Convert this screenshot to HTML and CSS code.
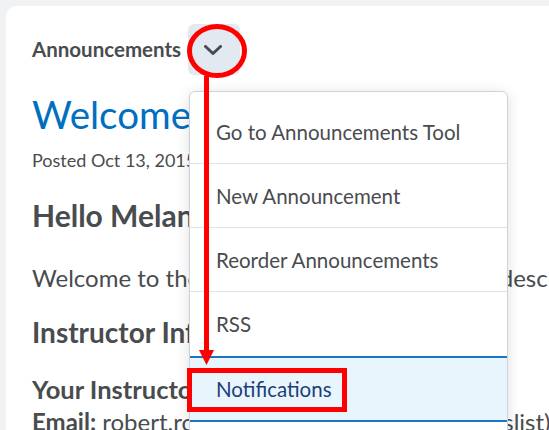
FILE: index.html
```html
<!DOCTYPE html>
<html>
<head>
<meta charset="utf-8">
<link rel="stylesheet" href="styles.css">
</head>
<body>
<div class="page">
  <div class="card">
    <div class="widget-head">
      <span class="widget-title">Announcements</span>
      <span class="menu-btn" role="button" aria-label="Actions">
        <svg class="chev" width="18" height="10" viewBox="0 0 18 10"><path d="M1.5 1.5 L9 8.5 L16.5 1.5" fill="none" stroke="#494c4e" stroke-width="3" stroke-linecap="round" stroke-linejoin="round"/></svg>
      </span>
    </div>
    <div class="content">
      <h1 class="ann-title">Welcome!</h1>
      <div class="posted">Posted Oct 13, 2015 9:00 AM</div>
      <h2 class="hello">Hello Melanie!</h2>
      <p class="line intro">Welcome to the course! Below is the course description.</p>
      <h2 class="sec">Instructor Information</h2>
      <p class="line who"><b>Your Instructor:</b> Robert</p>
      <p class="line email"><b>Email:</b> robert.robertson@school.edu (use classlist)</p>
    </div>
  </div>

  <div class="dropdown">
    <div class="item">Go to Announcements Tool</div>
    <div class="item">New Announcement</div>
    <div class="item">Reorder Announcements</div>
    <div class="item last">RSS</div>
    <div class="item active">Notifications</div>
    <div class="item">Settings</div>
  </div>

  <svg class="annot" width="549" height="430" viewBox="0 0 549 430">
    <ellipse cx="217" cy="51" rx="27.5" ry="24.5" fill="none" stroke="#ff0000" stroke-width="5"/>
    <line x1="206.5" y1="76" x2="206.5" y2="352" stroke="#ff0000" stroke-width="5"/>
    <polygon points="199,350 214,350 206.5,365" fill="#ff0000"/>
    <rect x="189.5" y="370.5" width="155" height="39" fill="none" stroke="#ff0000" stroke-width="5"/>
  </svg>
</div>
</body>
</html>
```
FILE: styles.css
```css
html, body {
  margin: 0;
  padding: 0;
}
body {
  background: #f1f2f4;
  font-family: Lato, "Open Sans", sans-serif;
  color: #494c4e;
  overflow: hidden;
  width: 549px;
  height: 430px;
}
.page {
  position: relative;
  width: 549px;
  height: 430px;
  overflow: hidden;
}
.card {
  margin: 6px 0 0 6px;
  width: 800px;
  height: 600px;
  background: #ffffff;
  border-radius: 10px 0 0 0;
  padding: 18px 0 0 26px;
  box-sizing: border-box;
}
.widget-head {
  display: flex;
  align-items: center;
  gap: 7px;
  height: 51px;
}
.widget-title {
  font-size: 20.5px;
  line-height: 1.2;
  font-weight: 700;
  color: #494c4e;
}
.menu-btn {
  flex: none;
  width: 52px;
  height: 51px;
  border-radius: 6px;
  background: #e3e9f1;
  display: flex;
  align-items: center;
  justify-content: center;
}
.chev {
  display: block;
  flex: none;
  margin-left: -3px;
}
.content {
  white-space: nowrap;
}
.ann-title {
  margin: 15.5px 0 0 0;
  font-size: 38.5px;
  font-weight: 400;
  color: #006fbf;
  line-height: 1.2;
}
.posted {
  margin-top: 13px;
  font-size: 18px;
  line-height: 1.2;
}
.hello {
  margin: 25.5px 0 0 0;
  font-size: 30px;
  font-weight: 700;
  line-height: 1.2;
}
.sec {
  margin: 23px 0 0 0;
  font-size: 28px;
  font-weight: 700;
  line-height: 1.2;
}
.line {
  margin: 0;
  font-size: 24px;
  line-height: 1.2;
}
.intro {
  margin-top: 31.5px;
}
.who {
  margin-top: 24.3px;
  font-size: 25.5px;
}
.email {
  margin-top: 3px;
}
.dropdown {
  position: absolute;
  left: 189px;
  top: 91px;
  width: 319px;
  background: #ffffff;
  border: 1px solid #cdd3dc;
  border-radius: 6px;
  box-shadow: 0 2px 14px rgba(0, 0, 0, 0.13);
  padding-top: 8px;
  box-sizing: border-box;
}
.item {
  height: 64px;
  box-sizing: border-box;
  padding-left: 26px;
  display: flex;
  align-items: center;
  font-size: 20.5px;
  color: #494c4e;
  border-bottom: 1px solid #dfe4ea;
}
.item.last {
  border-bottom: none;
}
.item.active {
  height: 66px;
  background: #e8f5fd;
  color: #1b3f78;
  border-top: 2px solid #1a75c2;
  border-bottom: 2px solid #1a75c2;
}
.annot {
  position: absolute;
  left: 0;
  top: 0;
  pointer-events: none;
}
```
